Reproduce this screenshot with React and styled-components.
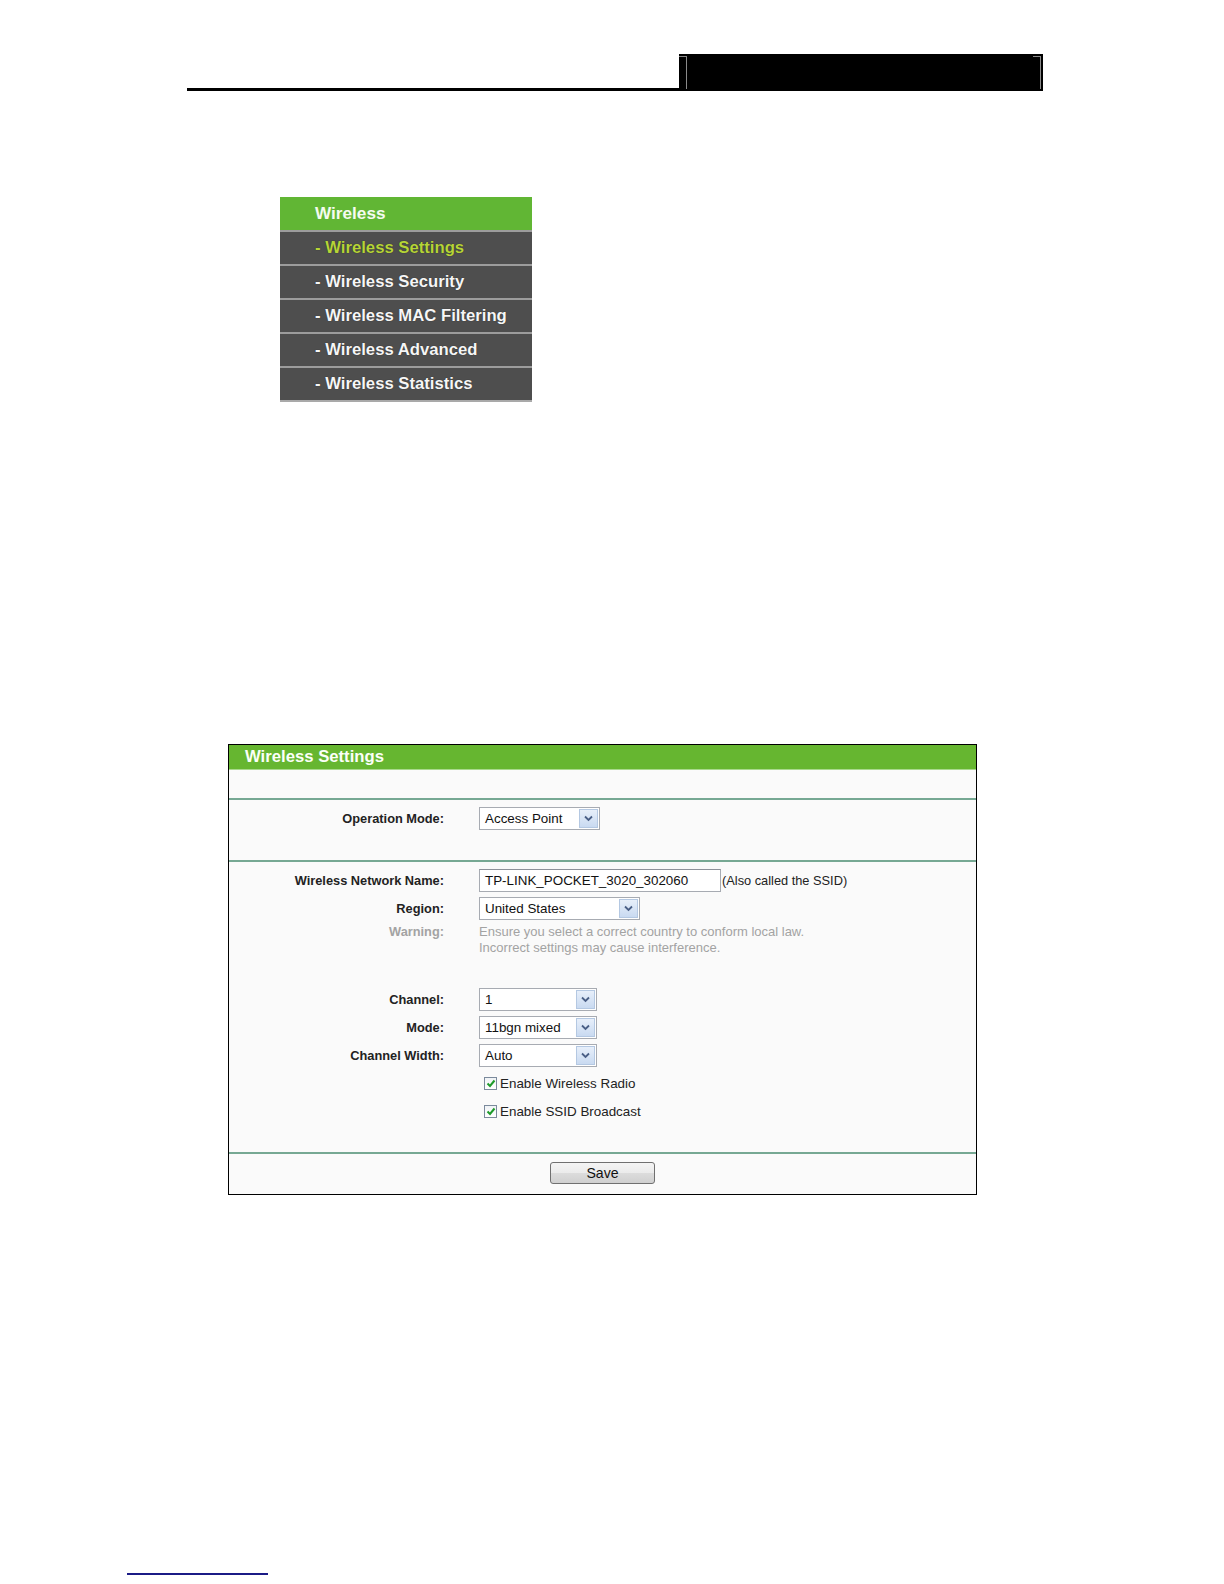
import React from "react";
import styled, { createGlobalStyle } from "styled-components";

const GlobalStyle = createGlobalStyle`
  html, body {
    margin: 0;
    padding: 0;
    background: #ffffff;
    overflow: hidden;
  }
  body {
    font-family: "Liberation Sans", Arial, sans-serif;
    color: #222;
  }
`;

const Page = styled.div`
  width: 1224px;
  height: 1584px;
  overflow: hidden;
  padding-top: 54px;
  box-sizing: border-box;
  display: flex;
  flex-direction: column;
`;

/* ---------- page header ---------- */

const Header = styled.div`
  margin-left: 187px;
  width: 856px;
  height: 37px;
  display: flex;
  align-items: flex-end;
`;

const HeaderRule = styled.div`
  flex: 1;
  border-bottom: 3px solid #000;
`;

const HeaderBox = styled.div`
  position: relative;
  width: 364px;
  height: 37px;
  background: #000;

  &::before,
  &::after {
    content: "";
    position: absolute;
    top: 2px;
    height: 32px;
    border-top: 1px solid #8a8a8a;
    border-right: 1px solid #8a8a8a;
  }
  &::before {
    left: 0;
    width: 7px;
  }
  &::after {
    right: 2px;
    width: 7px;
  }
`;

/* ---------- side menu ---------- */

const Menu = styled.div`
  margin-top: 106px;
  margin-left: 280px;
  width: 252px;
  display: flex;
  flex-direction: column;
  border-bottom: 2px solid #a9a9a9;
`;

const MenuHead = styled.div`
  height: 33px;
  background: #61b634;
  color: #f4fbef;
  font-weight: bold;
  font-size: 17.2px;
  padding-left: 35px;
  display: flex;
  align-items: center;
`;

const MenuItem = styled.div`
  height: 32px;
  border-top: 2px solid #9c9c9c;
  background: #4e4e4e;
  color: ${p => (p.active ? "#b6d437" : "#f6f6f6")};
  font-weight: bold;
  font-size: 16.7px;
  padding-left: 35px;
  display: flex;
  align-items: center;
  text-shadow: 0 0 1px rgba(0, 0, 0, 0.6);
  white-space: pre;

  &:first-of-type {
    border-top-color: #8e8e8e;
  }
`;

/* ---------- settings panel ---------- */

const Panel = styled.div`
  margin-top: 342px;
  margin-left: 228px;
  width: 749px;
  border: 1px solid #000;
  box-sizing: border-box;
  background: #fafafa;
  display: flex;
  flex-direction: column;
`;

const PanelTitle = styled.div`
  height: 24px;
  background: #66b630;
  border-bottom: 1px solid #a9d98d;
  color: #fbfff8;
  font-weight: bold;
  font-size: 16.7px;
  padding-left: 16px;
  display: flex;
  align-items: center;
`;

const Blank = styled.div`
  height: 28px;
`;

const Divider = styled.div`
  height: 2px;
  background: #76a893;
`;

const Section = styled.div`
  display: flex;
  flex-direction: column;
  padding: ${p => p.pad || "7px 0 30px"};
`;

const Row = styled.div`
  display: grid;
  grid-template-columns: 215px auto;
  column-gap: 35px;
  align-items: center;
  height: ${p => p.h || 23}px;
  margin-top: ${p => p.mt || 0}px;
`;

const Label = styled.div`
  text-align: right;
  font-weight: bold;
  font-size: 12.8px;
  color: ${p => (p.muted ? "#a3a3a3" : "#222")};
  align-self: ${p => (p.top ? "start" : "center")};
  line-height: 16px;
`;

const Field = styled.div`
  display: flex;
  align-items: center;
  gap: 1px;
  font-size: 13.4px;
`;

const TextBox = styled.div`
  width: 242px;
  height: 23px;
  box-sizing: border-box;
  border: 1px solid #a7abb2;
  border-top-color: #8d9199;
  background: #fff;
  padding-left: 5px;
  display: flex;
  align-items: center;
  font-size: 13.4px;
  color: #111;
`;

const Hint = styled.span`
  font-size: 12.8px;
  color: #222;
`;

const SelectBox = styled.div`
  width: ${p => p.w}px;
  height: 23px;
  box-sizing: border-box;
  border: 1px solid #a7abb2;
  background: #fff;
  display: flex;
  align-items: stretch;
  font-size: 13.4px;
  color: #111;
`;

const SelectValue = styled.div`
  flex: 1;
  padding-left: 5px;
  display: flex;
  align-items: center;
`;

const SelectArrow = styled.div`
  width: 17px;
  margin: 1px;
  border: 1px solid #b4c8e2;
  background: linear-gradient(#e7effa, #c9daf1);
  display: flex;
  align-items: center;
  justify-content: center;
`;

const WarnText = styled.div`
  font-size: 13px;
  line-height: 16px;
  color: #a3a3a3;
`;

const CheckRow = styled.label`
  display: flex;
  align-items: center;
  gap: 3px;
  margin-left: 5px;
  font-size: 13.4px;
  color: #222;
`;

const CheckMark = styled.span`
  width: 13px;
  height: 13px;
  box-sizing: border-box;
  border: 1px solid #7b8a9c;
  background: linear-gradient(#f0f3f6, #ffffff);
  display: flex;
  align-items: center;
  justify-content: center;
`;

const Footer = styled.div`
  height: 40px;
  box-sizing: border-box;
  padding-top: 8px;
  display: flex;
  align-items: flex-start;
  justify-content: center;
`;

const SaveButton = styled.button`
  width: 105px;
  height: 22px;
  border: 1px solid #707070;
  border-radius: 3px;
  background: linear-gradient(#f4f4f4 0%, #ebebeb 50%, #dcdcdc 51%, #d0d0d0 100%);
  font-family: "Liberation Sans", Arial, sans-serif;
  font-size: 14.1px;
  color: #111;
  padding: 0;
`;

const PageNote = styled.div`
  margin-top: 378px;
  margin-left: 127px;
  width: 141px;
  height: 2px;
  background: #1b1b86;
`;

const Chevron = () => (
  <svg width="9" height="7" viewBox="0 0 9 7">
    <path d="M1 1.5 L4.5 5 L8 1.5" fill="none" stroke="#4a5f86" strokeWidth="1.8" />
  </svg>
);

const Check = () => (
  <svg width="10" height="9" viewBox="0 0 10 9">
    <path d="M1.5 4.5 L4 7 L8.5 1.5" fill="none" stroke="#1e9b2a" strokeWidth="2" />
  </svg>
);

const Select = ({ value, w }) => (
  <SelectBox w={w}>
    <SelectValue>{value}</SelectValue>
    <SelectArrow>
      <Chevron />
    </SelectArrow>
  </SelectBox>
);

const menuItems = [
  "Wireless Settings",
  "Wireless Security",
  "Wireless MAC Filtering",
  "Wireless Advanced",
  "Wireless Statistics",
];

export default function App() {
  return (
    <Page>
      <GlobalStyle />
      <Header>
        <HeaderRule />
        <HeaderBox />
      </Header>

      <Menu>
        <MenuHead>Wireless</MenuHead>
        {menuItems.map((m, i) => (
          <MenuItem key={m} active={i === 0}>{"- " + m}</MenuItem>
        ))}
      </Menu>

      <Panel>
        <PanelTitle>Wireless Settings</PanelTitle>
        <Blank />
        <Divider />
        <Section>
          <Row>
            <Label>Operation Mode:</Label>
            <Field>
              <Select value="Access Point" w={121} />
            </Field>
          </Row>
        </Section>
        <Divider />
        <Section pad="7px 0 30px">
          <Row>
            <Label>Wireless Network Name:</Label>
            <Field>
              <TextBox>TP-LINK_POCKET_3020_302060</TextBox>
              <Hint>(Also called the SSID)</Hint>
            </Field>
          </Row>
          <Row mt={5}>
            <Label>Region:</Label>
            <Field>
              <Select value="United States" w={161} />
            </Field>
          </Row>
          <Row mt={4} h={32}>
            <Label muted top>Warning:</Label>
            <WarnText>
              Ensure you select a correct country to conform local law.
              <br />
              Incorrect settings may cause interference.
            </WarnText>
          </Row>
          <Row mt={32}>
            <Label>Channel:</Label>
            <Field>
              <Select value="1" w={118} />
            </Field>
          </Row>
          <Row mt={5}>
            <Label>Mode:</Label>
            <Field>
              <Select value="11bgn mixed" w={118} />
            </Field>
          </Row>
          <Row mt={5}>
            <Label>Channel Width:</Label>
            <Field>
              <Select value="Auto" w={118} />
            </Field>
          </Row>
          <Row mt={5} h={22}>
            <span />
            <CheckRow>
              <CheckMark><Check /></CheckMark>
              Enable Wireless Radio
            </CheckRow>
          </Row>
          <Row mt={6} h={22}>
            <span />
            <CheckRow>
              <CheckMark><Check /></CheckMark>
              Enable SSID Broadcast
            </CheckRow>
          </Row>
        </Section>
        <Divider />
        <Footer>
          <SaveButton>Save</SaveButton>
        </Footer>
      </Panel>

      <PageNote />
    </Page>
  );
}
